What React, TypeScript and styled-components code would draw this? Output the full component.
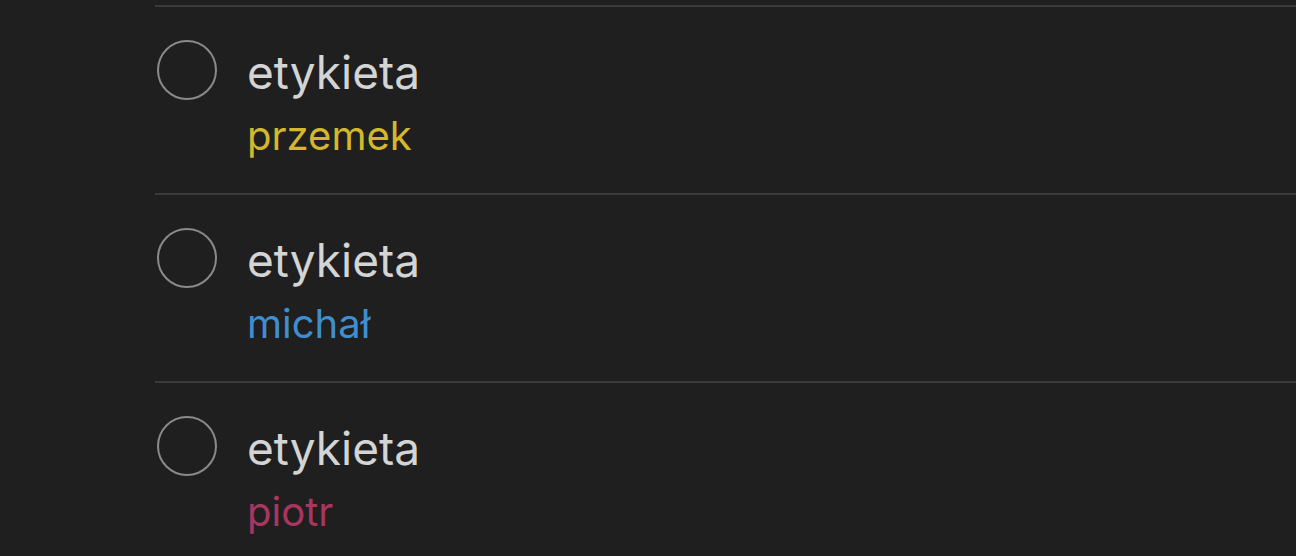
import styled, { createGlobalStyle } from 'styled-components';
import { FC } from 'react';

const GlobalStyle = createGlobalStyle`
    html, body {
        margin: 0;
        padding: 0;
        background: #1f1f1f;
    }
    body {
        font-family: Inter, "Noto Sans", sans-serif;
        -webkit-font-smoothing: antialiased;
    }
`;

const Page = styled.div`
    min-height: 556px;
    padding: 5px 0 0 155px;
    background: #1f1f1f;
    overflow: hidden;
`;

const Row = styled.div`
    display: flex;
    align-items: flex-start;
    gap: 30px;
    height: 188px;
    box-sizing: border-box;
    padding: 33px 0 0 2px;
    border-top: 2px solid #393939;
`;

const Radio = styled.div`
    flex: none;
    width: 60px;
    height: 60px;
    box-sizing: border-box;
    border: 2.5px solid #8a8a8a;
    border-radius: 50%;
`;

const Texts = styled.div`
    display: flex;
    flex-direction: column;
    gap: 10px;
    padding-top: 4px;
`;

const Title = styled.div`
    font-size: 46px;
    line-height: 56px;
    color: #d4d4d4;
`;

const Owner = styled.div<{ $color: string }>`
    font-size: 40px;
    line-height: 52px;
    color: ${(p) => p.$color};
`;

const items = [
    { title: 'etykieta', owner: 'przemek', color: '#d3b72c' },
    { title: 'etykieta', owner: 'michał', color: '#3f8fd0' },
    { title: 'etykieta', owner: 'piotr', color: '#a83660' },
];

const App: FC = () => {
    return (
        <Page>
            <GlobalStyle />
            {items.map((item) => (
                <Row key={item.owner}>
                    <Radio />
                    <Texts>
                        <Title>{item.title}</Title>
                        <Owner $color={item.color}>{item.owner}</Owner>
                    </Texts>
                </Row>
            ))}
        </Page>
    );
};

export default App;
